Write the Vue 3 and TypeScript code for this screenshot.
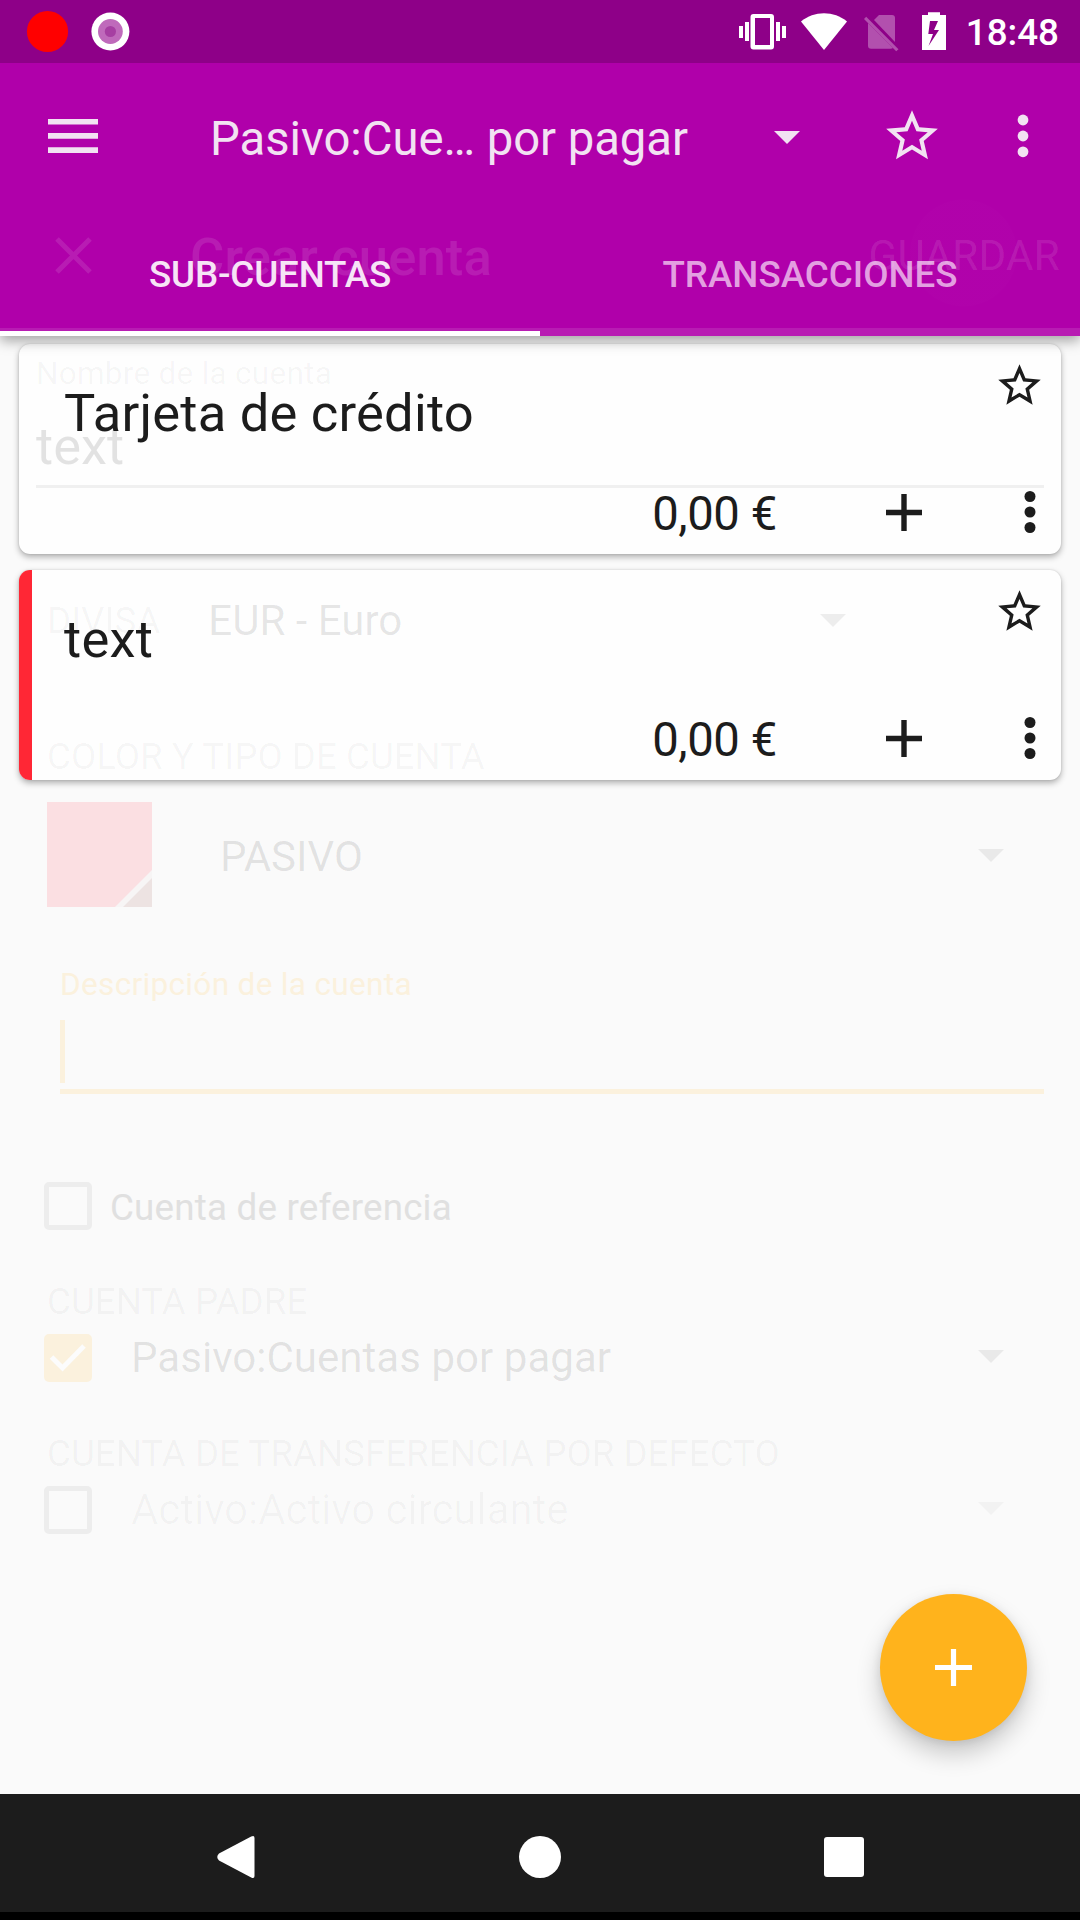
<script setup lang="ts">
interface Account {
  name: string
  balance: string
  color: string
}

const accounts: Account[] = [
  { name: 'Tarjeta de crédito', balance: '0,00 €', color: 'transparent' },
  { name: 'text', balance: '0,00 €', color: '#ff2735' },
]

const starPath =
  'M22 9.24l-7.19-.62L12 2 9.19 8.63 2 9.24l5.46 4.73L5.82 21 12 17.27 18.18 21l-1.63-7.03L22 9.24zM12 15.4l-3.76 2.27 1-4.28-3.32-2.88 4.38-.38L12 6.1l1.71 4.04 4.38.38-3.32 2.88 1 4.28L12 15.4z'
</script>

<template>
  <div class="screen">
    <header class="top">
      <div class="status">
        <svg class="notes" width="150" height="63" viewBox="0 0 150 63">
          <circle cx="47.5" cy="31.5" r="20.6" fill="#f00" />
          <circle cx="110.4" cy="31.5" r="19" fill="#fff" />
          <circle cx="110.4" cy="31.5" r="12.4" fill="#bf6abb" />
          <circle cx="110.4" cy="31.5" r="5.6" fill="#a63fa2" />
        </svg>
        <svg class="system" width="216" height="63" viewBox="735 0 216 63">
          <g fill="#fff">
            <path fill-rule="evenodd" d="M753.5 14h17.5a3 3 0 0 1 3 3v29.500a3 3 0 0 1-3 3h-17.500a3 3 0 0 1-3-3V17a3 3 0 0 1 3-3zM755 18v27h15V18z" />
            <path d="M739 26h4v12h-4zM745 22h4v19h-4zM776 22h4v19h-4zM782 26h4v12h-4z" />
            <path d="M801 21.500C814 10.500 834 10.500 847 21.500L824 50z" />
            <path fill-rule="evenodd" d="M928 12.300h12V15h6v35h-24V15h6zM930 21l-1.700 13h4.700l-4.500 12 10.500-16h-5l4-9z" />
          </g>
          <g fill="#b250ae">
            <path d="M879 15h13a3 3 0 0 1 3 3v24L874 20z" />
            <path d="M868 23l25 25q-1 .8-2.500.8H871a3 3 0 0 1-3-3z" />
            <path d="M864 19l2.200-2.200 32.300 32.400-2.300 2.100z" />
          </g>
        </svg>
        <span class="clock">18:48</span>
      </div>

      <div class="toolbar">
        <svg class="menu" width="50" height="34" viewBox="0 0 50 34">
          <path d="M0 0h50v5.600H0zM0 14.100h50v5.600H0zM0 28.300h50v5.600H0z" />
        </svg>
        <span class="title">Pasivo:Cue… por pagar</span>
        <svg class="title-caret" width="26" height="13" viewBox="0 0 26 13"><path d="M0 0h26L13 13z" /></svg>
        <svg class="fav" width="62" height="62" viewBox="0 0 24 24"><path :d="starPath" /></svg>
        <svg class="more" width="12" height="44" viewBox="0 0 12 44">
          <circle cx="6" cy="6" r="5.400" /><circle cx="6" cy="22" r="5.400" /><circle cx="6" cy="37.800" r="5.400" />
        </svg>
      </div>

      <nav class="tabs">
        <div class="tab active">SUB-CUENTAS</div>
        <div class="tab">TRANSACCIONES</div>
      </nav>
    </header>

    <main class="content">
      <article v-for="account in accounts" :key="account.name" class="card">
        <div class="stripe" :style="{ background: account.color }"></div>
        <div class="card-body">
          <div class="card-head">
            <span class="name">{{ account.name }}</span>
            <svg class="card-star" width="51" height="51" viewBox="0 0 24 24"><path :d="starPath" /></svg>
          </div>
          <div class="card-foot">
            <span class="balance">{{ account.balance }}</span>
            <svg class="add" width="36" height="37" viewBox="0 0 36 37"><path d="M15.300 0h5.400v15.800H36v5.400H20.700V37h-5.400V21.200H0v-5.400h15.300z" /></svg>
            <svg class="card-more" width="12" height="44" viewBox="0 0 12 44">
              <circle cx="6" cy="6.500" r="5.500" /><circle cx="6" cy="22" r="5.500" /><circle cx="6" cy="37.500" r="5.500" />
            </svg>
          </div>
        </div>
      </article>
    </main>

    <footer class="navbar">
      <svg width="1080" height="118" viewBox="0 1794 1080 118" fill="#fff">
        <path d="M251.200 1836.500q3.300-1.700 3.300 1.500v38q0 3.200-3.300 1.500L219 1860.500q-3.500-3.500 0-7z" />
        <circle cx="540" cy="1857" r="21" />
        <rect x="824" y="1837" width="40" height="40" rx="3" />
      </svg>
    </footer>

    <button class="fab" aria-label="Añadir">
      <svg width="37" height="37" viewBox="0 0 37 37"><path d="M15.900 0h5.200v15.900H37v5.200H21.100V37h-5.200V21.100H0v-5.200h15.900z" fill="#fff" /></svg>
    </button>

    <!-- Account form fading out above the account list -->
    <section class="form">
      <div class="form-bar">
        <svg width="37" height="37" viewBox="0 0 37 37"><path d="M2 2l33 33M35 2L2 35" fill="none" stroke="currentColor" stroke-width="5" /></svg>
        <span class="form-title">Crear cuenta</span>
        <span class="save">GUARDAR</span>
      </div>
      <div class="form-edge"></div>

      <div class="field-label">Nombre de la cuenta</div>
      <div class="field-value">text</div>

      <div class="row currency">
        <span class="caption">DIVISA</span>
        <span class="option">EUR - Euro</span>
        <svg class="caret" width="26" height="13" viewBox="0 0 26 13"><path d="M0 0h26L13 13z" /></svg>
      </div>

      <div class="caption kind-caption">COLOR Y TIPO DE CUENTA</div>
      <div class="row kind">
        <svg class="swatch" width="105" height="105" viewBox="0 0 105 105">
          <path d="M0 0h105v105H0z" fill="#fbdfe2" />
          <path d="M105 71v34H71z" fill="#ede3e2" />
          <path d="M105 68v8L76 105h-8z" fill="#f7f5f5" />
        </svg>
        <span class="option">PASIVO</span>
        <svg class="caret" width="26" height="13" viewBox="0 0 26 13"><path d="M0 0h26L13 13z" /></svg>
      </div>

      <div class="description">
        <div class="description-label">Descripción de la cuenta</div>
        <div class="cursor"></div>
      </div>

      <div class="row placeholder">
        <span class="box"></span>
        <span class="check-text">Cuenta de referencia</span>
      </div>

      <div class="caption parent-caption">CUENTA PADRE</div>
      <div class="row choice">
        <span class="box checked">
          <svg width="48" height="48" viewBox="0 0 48 48"><path d="M7.500 23l11 11L40 12" fill="none" stroke="#fcfcfc" stroke-width="5" /></svg>
        </span>
        <span class="option">Pasivo:Cuentas por pagar</span>
        <svg class="caret" width="26" height="13" viewBox="0 0 26 13"><path d="M0 0h26L13 13z" /></svg>
      </div>

      <div class="caption transfer-caption">CUENTA DE TRANSFERENCIA POR DEFECTO</div>
      <div class="row choice disabled">
        <span class="box"></span>
        <span class="option">Activo:Activo circulante</span>
        <svg class="caret" width="26" height="13" viewBox="0 0 26 13"><path d="M0 0h26L13 13z" /></svg>
      </div>
    </section>
  </div>
</template>

<style>
body {
  margin: 0;
}
</style>

<style scoped>
.screen {
  position: relative;
  display: flex;
  flex-direction: column;
  width: 1080px;
  height: 1920px;
  overflow: hidden;
  background: #fafafa;
  font-family: Roboto, sans-serif;
  white-space: nowrap;
}
.screen * {
  box-sizing: border-box;
}
svg {
  display: block;
  flex: none;
}

.top {
  position: relative;
  z-index: 1;
  height: 336px;
  flex: none;
  background: #b000aa;
  box-shadow: 0 5px 12px rgba(0, 0, 0, 0.34);
}
.status {
  display: flex;
  align-items: center;
  height: 63px;
  background: #8e0088;
}
.system {
  margin-left: auto;
}
.clock {
  width: 129px;
  padding: 2px 21px 0 0;
  text-align: right;
  color: #fff;
  font-size: 36.75px;
  font-weight: 500;
  line-height: 40px;
}
.toolbar {
  display: flex;
  align-items: center;
  height: 147px;
  padding-left: 48px;
  fill: #f2e2f2;
}
.menu {
  margin-top: -1px;
}
.title {
  width: 562px;
  margin-left: 112px;
  padding-top: 5px;
  color: #f2e2f2;
  font-size: 47.25px;
  line-height: 56px;
  letter-spacing: -0.05px;
}
.title-caret {
  margin-left: 2px;
  margin-top: 2px;
}
.fav {
  margin-top: -2px;
  margin-left: 81px;
}
.more {
  margin-top: -1px;
  margin-left: 74px;
}
.tabs {
  display: flex;
  height: 126px;
}
.tab {
  display: flex;
  flex: 1;
  align-items: center;
  justify-content: center;
  padding-top: 8px;
  border-bottom: 5px solid transparent;
  color: #e39fe1;
  font-size: 36.75px;
  font-weight: 500;
  line-height: 44px;
}
.tab.active {
  border-color: #fff;
  color: #f7e3f6;
  letter-spacing: -0.15px;
}

.content {
  display: flex;
  flex: 1;
  flex-direction: column;
  gap: 16px;
  padding: 8px 19px 0;
}
.card {
  display: flex;
  height: 210px;
  overflow: hidden;
  border-radius: 11px;
  background: #fefefe;
  box-shadow: 0 3px 6px rgba(0, 0, 0, 0.3), 0 0 2px rgba(0, 0, 0, 0.15);
}
.stripe {
  width: 13px;
}
.card-body {
  flex: 1;
  color: #1c1c1c;
  fill: #1c1c1c;
}
.card-head {
  display: flex;
  justify-content: space-between;
  height: 136px;
  padding: 16px 16px 0 32px;
}
.name {
  padding-top: 23px;
  font-size: 52.5px;
  line-height: 60px;
  letter-spacing: 0.22px;
}
.card-foot {
  display: flex;
  align-items: center;
  justify-content: flex-end;
  height: 64px;
  padding-right: 25px;
}
.balance {
  padding-top: 4px;
  font-size: 47.25px;
  line-height: 56px;
  letter-spacing: -0.4px;
}
.add {
  margin-left: 109px;
}
.card-more {
  margin-left: 102px;
}

.navbar {
  height: 126px;
  flex: none;
  border-bottom: 8px solid #000;
  background: #1c1c1c;
}
.fab {
  position: absolute;
  right: 53px;
  bottom: 179px;
  display: flex;
  align-items: center;
  justify-content: center;
  width: 147px;
  height: 147px;
  padding: 0;
  border: 0;
  border-radius: 50%;
  background: #ffb31c;
  box-shadow: 0 13px 24px rgba(0, 0, 0, 0.2), 0 2px 10px rgba(0, 0, 0, 0.09);
}

.form {
  position: absolute;
  inset: 0;
  z-index: 2;
  display: flex;
  flex-direction: column;
  padding-top: 182px;
  pointer-events: none;
}
.form-bar {
  display: flex;
  align-items: center;
  height: 146px;
  padding: 0 20px 0 55px;
  background: radial-gradient(circle at 963.6px 71px, rgba(255, 255, 255, 0.009) 53px, transparent 54px);
  color: rgba(255, 255, 255, 0.11);
}
.form-title {
  padding-top: 3px;
  margin-left: 98px;
  font-size: 52.5px;
  font-weight: 500;
  line-height: 60px;
  letter-spacing: 0.15px;
}
.save {
  margin-left: auto;
  padding-top: 1px;
  font-size: 42px;
  line-height: 50px;
  letter-spacing: 0.35px;
}
.form-edge {
  height: 8px;
  background: rgba(255, 255, 255, 0.11);
}
.field-label {
  margin: 18px 36px 0;
  color: rgba(0, 0, 0, 0.04);
  font-size: 31.5px;
  line-height: 40px;
  letter-spacing: 0.27px;
}
.field-value {
  height: 72px;
  margin: 22px 36px 0;
  border-bottom: 3px solid rgba(0, 0, 0, 0.055);
  color: rgba(0, 0, 0, 0.11);
  font-size: 52.5px;
  line-height: 60px;
}
.row {
  display: flex;
  align-items: center;
}
.caption {
  color: rgba(0, 0, 0, 0.038);
  font-size: 36.75px;
  line-height: 40px;
}
.option {
  color: rgba(0, 0, 0, 0.1);
  font-size: 42px;
  line-height: 50px;
}
.caret {
  margin-left: auto;
  fill: rgba(0, 0, 0, 0.065);
}
.currency {
  height: 60px;
  margin-top: 102.500px;
  padding: 0 234px 0 47px;
}
.currency .option {
  margin-left: 48px;
}
.kind-caption {
  margin: 86px 0 0 47px;
}
.kind {
  height: 105px;
  margin-top: 25.500px;
  padding: 0 76px 0 47px;
}
.kind .option {
  margin-left: 68px;
  padding-top: 4px;
}
.kind .caret {
  margin-top: 2px;
}
.description {
  height: 130px;
  margin: 57px 36px 0 60px;
  border-bottom: 5px solid #fbf1dd;
}
.description-label {
  padding-top: 1px;
  color: #fbf1dd;
  font-size: 31.5px;
  line-height: 40px;
  letter-spacing: 0.34px;
}
.cursor {
  width: 5px;
  height: 63px;
  margin-top: 15px;
  background: #fbf1dd;
}
.placeholder {
  height: 48px;
  margin-top: 88px;
  padding-left: 44px;
}
.box {
  width: 48px;
  height: 48px;
  border: 5.500px solid #ededed;
  border-radius: 5px;
}
.box.checked {
  border: 0;
  background: #fbf1dd;
}
.check-text {
  margin-left: 18px;
  padding-top: 3px;
  color: #e0e0e0;
  font-size: 36.75px;
  line-height: 44px;
  letter-spacing: 0.2px;
}
.parent-caption {
  margin: 51.500px 0 0 47px;
}
.choice {
  height: 48px;
  margin-top: 12.500px;
  padding: 0 76px 0 44px;
}
.choice .option {
  margin-left: 39px;
  letter-spacing: 0.04px;
}
.choice .caret {
  margin-top: -3px;
}
.transfer-caption {
  margin: 51.500px 0 0 47px;
}
.choice.disabled .option {
  color: rgba(0, 0, 0, 0.03);
  letter-spacing: -0.05px;
}
.disabled .caret {
  fill: rgba(0, 0, 0, 0.03);
}
</style>
